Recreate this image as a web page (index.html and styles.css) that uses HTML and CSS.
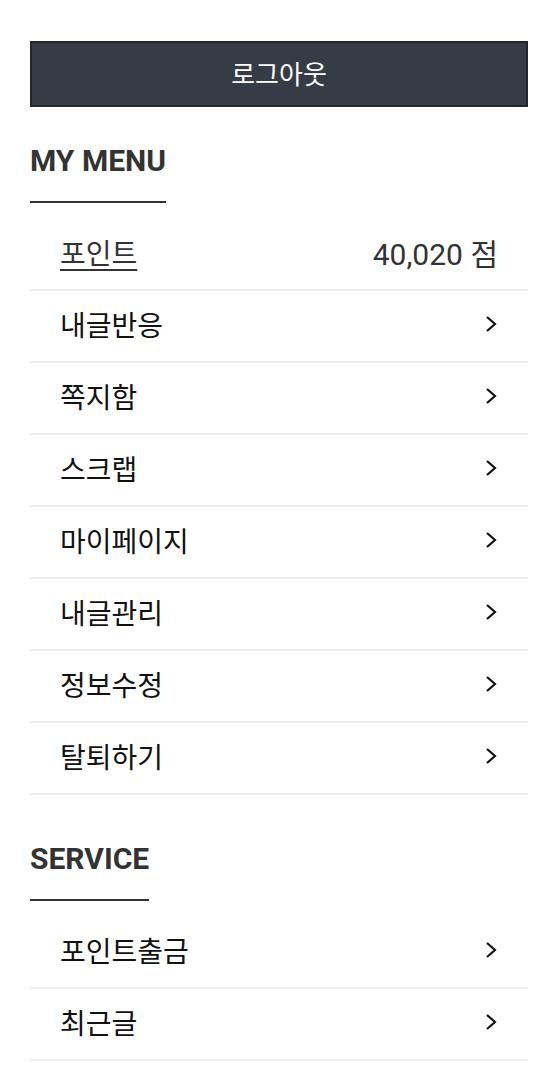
FILE: index.html
```html
<!DOCTYPE html>
<html lang="ko">
<head>
<meta charset="utf-8">
<link rel="stylesheet" href="styles.css">
</head>
<body>
<div class="page">
  <button class="logout">로그아웃</button>

  <section class="section">
    <h2 class="title"><span>MY MENU</span></h2>
    <ul class="list">
      <li class="row"><a class="point-link" href="#">포인트</a><span class="point-value">40,020 점</span></li>
      <li class="row"><span>내글반응</span><svg class="chev" viewBox="0 0 14 18"><path d="M3 2l8 7-8 7" /></svg></li>
      <li class="row"><span>쪽지함</span><svg class="chev" viewBox="0 0 14 18"><path d="M3 2l8 7-8 7" /></svg></li>
      <li class="row"><span>스크랩</span><svg class="chev" viewBox="0 0 14 18"><path d="M3 2l8 7-8 7" /></svg></li>
      <li class="row"><span>마이페이지</span><svg class="chev" viewBox="0 0 14 18"><path d="M3 2l8 7-8 7" /></svg></li>
      <li class="row"><span>내글관리</span><svg class="chev" viewBox="0 0 14 18"><path d="M3 2l8 7-8 7" /></svg></li>
      <li class="row"><span>정보수정</span><svg class="chev" viewBox="0 0 14 18"><path d="M3 2l8 7-8 7" /></svg></li>
      <li class="row"><span>탈퇴하기</span><svg class="chev" viewBox="0 0 14 18"><path d="M3 2l8 7-8 7" /></svg></li>
    </ul>
  </section>

  <section class="section service">
    <h2 class="title"><span>SERVICE</span></h2>
    <ul class="list">
      <li class="row"><span>포인트출금</span><svg class="chev" viewBox="0 0 14 18"><path d="M3 2l8 7-8 7" /></svg></li>
      <li class="row"><span>최근글</span><svg class="chev" viewBox="0 0 14 18"><path d="M3 2l8 7-8 7" /></svg></li>
    </ul>
  </section>
</div>
</body>
</html>
```

FILE: styles.css
```css
* { box-sizing: border-box; }
html, body { margin: 0; padding: 0; background: #fff; }
body {
  font-family: Roboto, "Noto Sans CJK KR", sans-serif;
  color: #111;
}
.page {
  padding: 41px 18px 0 30px;
}
.logout {
  display: block;
  width: 498px;
  height: 66px;
  margin: 0;
  padding: 0 0 4px;
  background: #353c46;
  border: 2px solid #23272d;
  color: #fff;
  font-family: "Noto Sans CJK KR", sans-serif;
  font-size: 26px;
  font-weight: 400;
}
.section { margin-top: 39px; width: 498px; }
.section.service { margin-top: 49px; }
.title {
  margin: 0;
  font-size: 30px;
  font-weight: 700;
  color: #333;
  line-height: 1;
}
.title span {
  display: inline-block;
  padding-bottom: 25px;
  border-bottom: 2px solid #333;
}
.list {
  list-style: none;
  margin: 16px 0 0;
  padding: 0;
}
.row {
  display: flex;
  align-items: center;
  justify-content: space-between;
  height: 72px;
  padding: 0 30px 4px;
  border-bottom: 2px solid #eee;
  font-family: "Noto Sans CJK KR", sans-serif;
  font-size: 28px;
  color: #111;
}
.point-link {
  color: #333;
  text-decoration: underline;
  text-underline-offset: 5px;
  text-decoration-thickness: 2px;
}
.point-value {
  font-family: Roboto, "Noto Sans CJK KR", sans-serif;
  font-size: 30px;
  color: #333;
}
.chev {
  width: 14px;
  height: 18px;
  fill: none;
  stroke: #111;
  stroke-width: 2.2;
}
```
